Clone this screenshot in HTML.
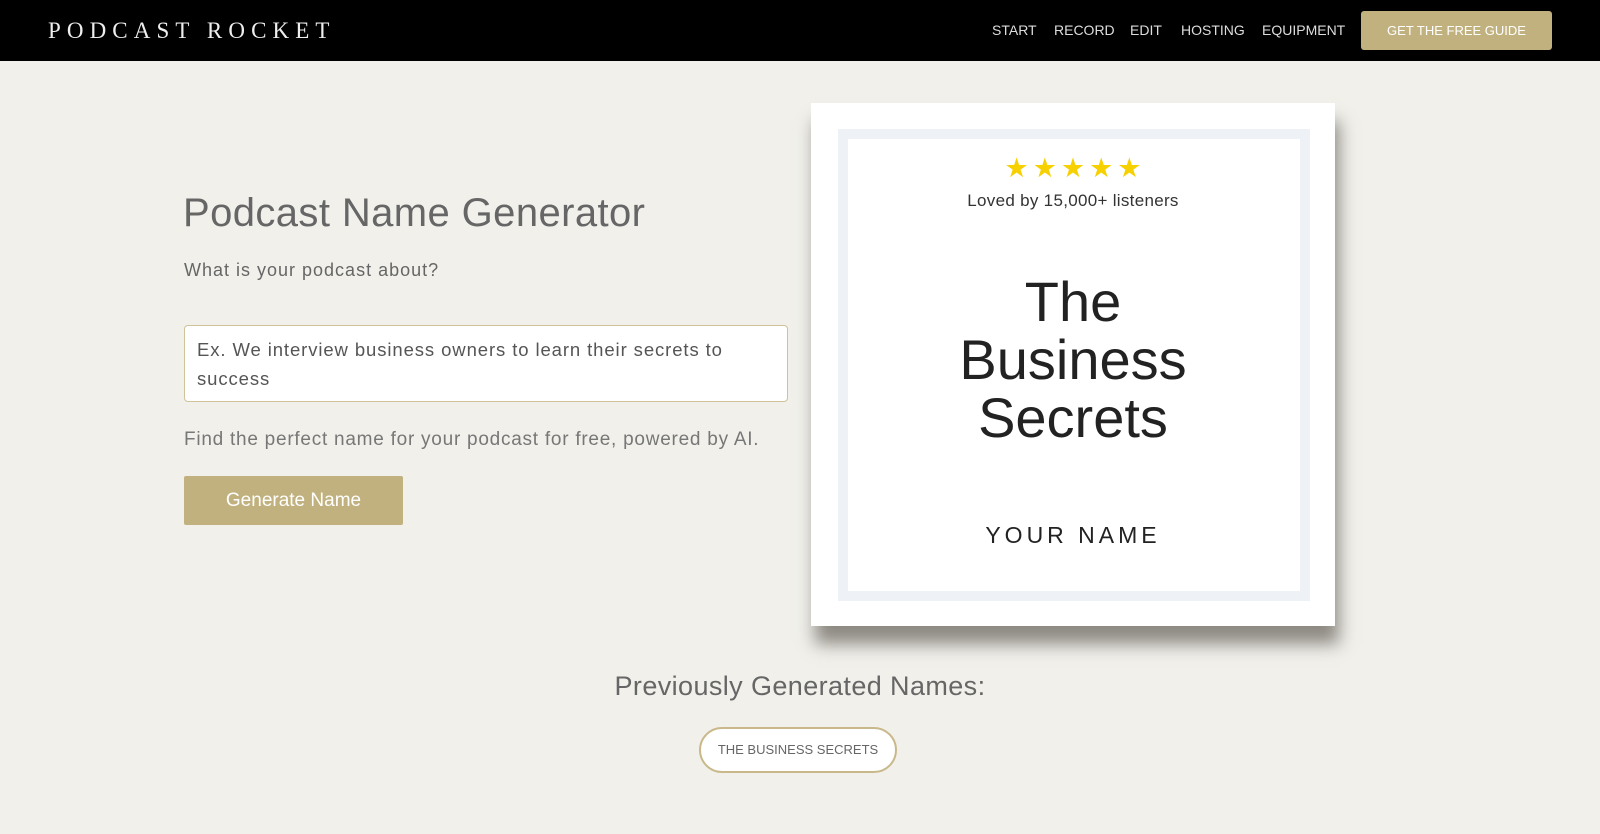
<!DOCTYPE html>
<html><head><meta charset="utf-8"><style>
*{margin:0;padding:0;box-sizing:border-box}
body{width:1600px;height:834px;background:#f1f0eb;font-family:"Liberation Sans",sans-serif;position:relative;overflow:hidden}
.hdr{position:absolute;left:0;top:0;width:1600px;height:61px;background:#000}
.logo{position:absolute;left:48px;top:18px;font-family:"Liberation Serif",serif;font-size:23px;letter-spacing:6.1px;color:#eee;white-space:nowrap}
.nav{position:absolute;top:22px;font-size:14px;color:#ddd}
.gbtn{position:absolute;left:1361px;top:11px;width:191px;height:39px;background:#c1b17e;border-radius:3px;color:#fff;font-size:13px;text-align:center;line-height:40px}
.t{position:absolute;white-space:nowrap}
</style></head><body>
<div class="hdr">
<div class="logo">PODCAST ROCKET</div>
<div class="nav" style="left:992px">START</div>
<div class="nav" style="left:1054px">RECORD</div>
<div class="nav" style="left:1130px">EDIT</div>
<div class="nav" style="left:1181px">HOSTING</div>
<div class="nav" style="left:1262px">EQUIPMENT</div>
<div class="gbtn">GET THE FREE GUIDE</div>
</div>
<div class="t" style="left:183px;top:191px;font-size:40px;color:#666;letter-spacing:0.4px">Podcast Name Generator</div>
<div class="t" style="left:184px;top:260px;font-size:18px;color:#666;letter-spacing:1px">What is your podcast about?</div>
<div style="position:absolute;left:184px;top:325px;width:604px;height:77px;background:#fff;border:1px solid #cfc39a;border-radius:4px;padding:9px 12px;font-size:18.5px;line-height:29px;color:#555;letter-spacing:0.9px">Ex. We interview business owners to learn their secrets to success</div>
<div class="t" style="left:184px;top:429px;font-size:19px;color:#777;letter-spacing:0.75px">Find the perfect name for your podcast for free, powered by AI.</div>
<div style="position:absolute;left:184px;top:476px;width:219px;height:49px;background:#c1b17e;border-radius:2px;color:#fff;font-size:19px;text-align:center;line-height:49px">Generate Name</div>
<div style="position:absolute;left:811px;top:103px;width:524px;height:523px;background:#fff;box-shadow:4px 18px 16px rgba(60,55,45,0.55)">
<div style="position:absolute;left:27px;top:26px;width:472px;height:472px;border:10px solid #eef1f5"></div>
<div class="t" style="left:0;width:524px;text-align:center;top:50px;font-size:27px;color:#f7d000;letter-spacing:4px;padding-left:4px">★★★★★</div>
<div class="t" style="left:0;width:524px;text-align:center;top:88px;font-size:17px;color:#333;letter-spacing:0.3px">Loved by 15,000+ listeners</div>
<div style="position:absolute;left:0;width:524px;text-align:center;top:170px;font-size:56px;line-height:58px;color:#222">The<br>Business<br>Secrets</div>
<div class="t" style="left:0;width:524px;text-align:center;top:419px;font-size:23px;letter-spacing:4px;color:#222">YOUR NAME</div>
</div>
<div class="t" style="left:0;width:1600px;text-align:center;top:671px;font-size:27px;color:#666;letter-spacing:0.4px">Previously Generated Names:</div>
<div style="position:absolute;left:699px;top:727px;width:198px;height:46px;border:2px solid #c9b98a;border-radius:23px;background:#fff;font-size:13px;color:#666;text-align:center;line-height:42px">THE BUSINESS SECRETS</div>
</body></html>
